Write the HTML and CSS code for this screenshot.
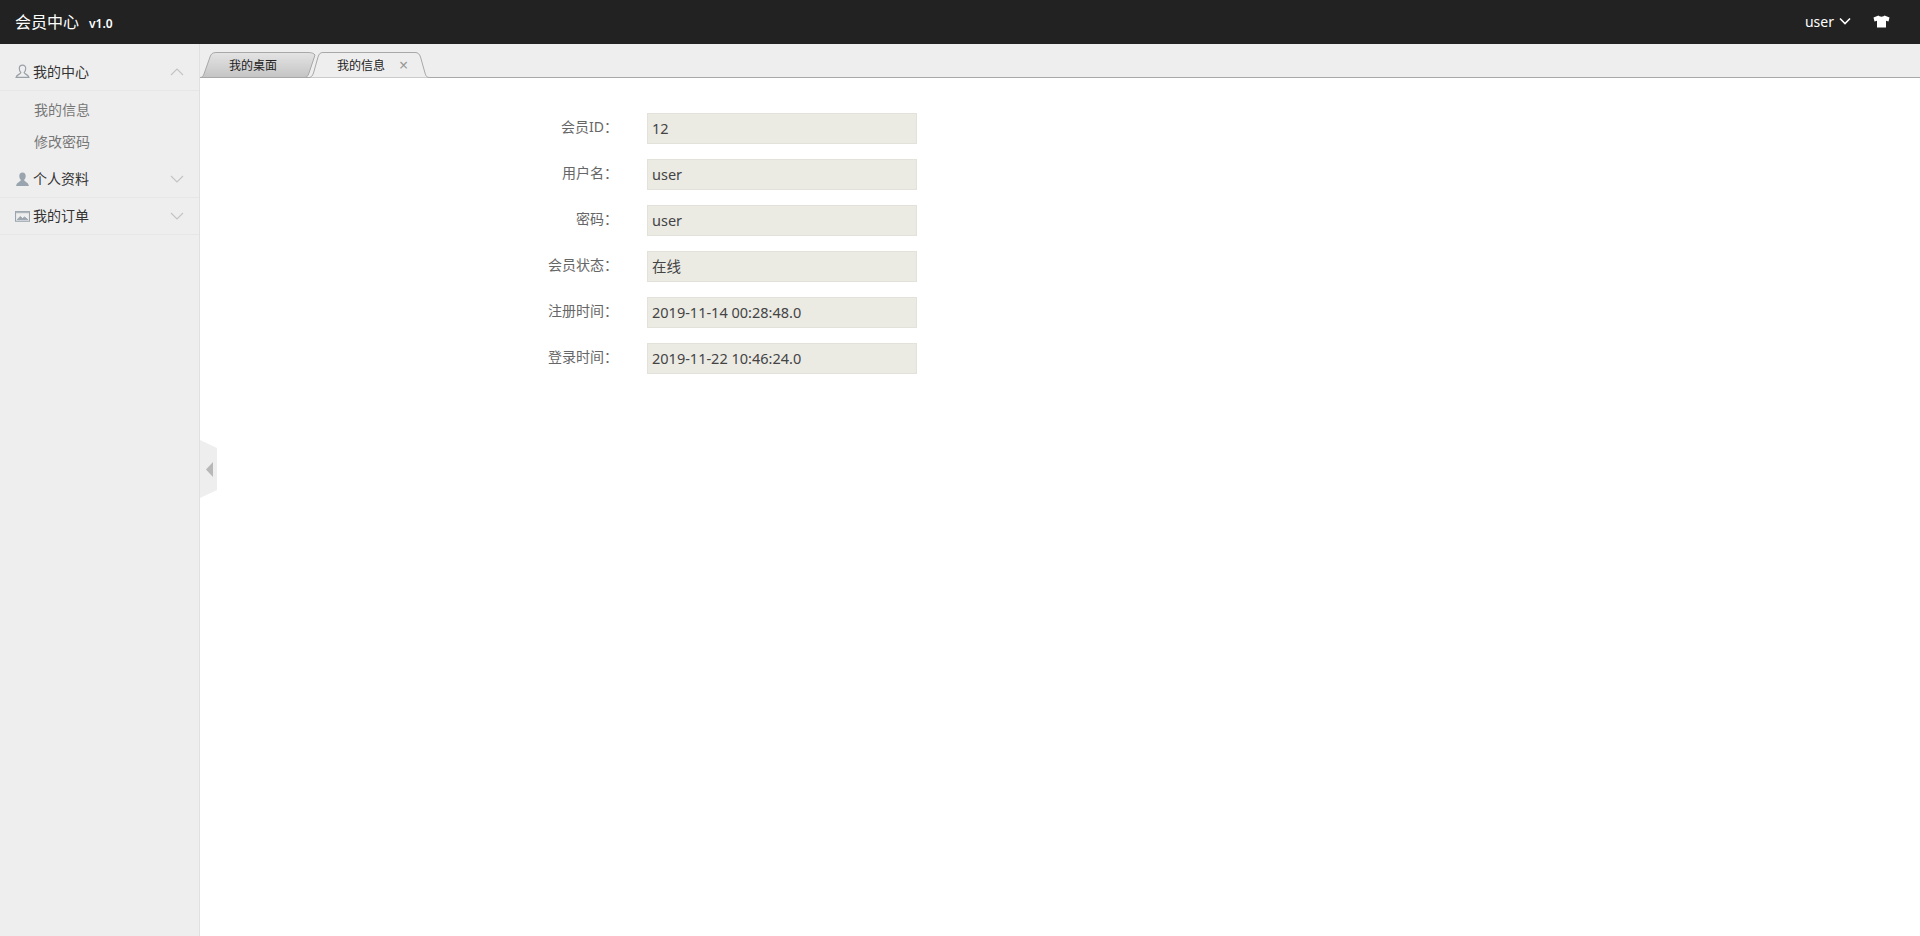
FILE: index.html
```html
<!DOCTYPE html>
<html lang="zh-CN">
<head>
    <meta charset="UTF-8">
    <title>会员中心</title>
    <link rel="stylesheet" href="styles.css">
</head>
<body>
    <!-- 顶部导航 -->
    <header class="navbar">
        <div class="brand">会员中心<span class="version">v1.0</span></div>
        <div class="nav-right">
            <span class="nav-user">user</span>
            <svg class="nav-caret" width="12" height="8" viewBox="0 0 12 8"><path d="M1 1.500l5 5 5-5" fill="none" stroke="#fff" stroke-width="1.600"/></svg>
            <svg class="nav-shirt" width="17" height="13" viewBox="0 0 17 13"><path d="M5.500 0.500L0.500 2.500 1.500 6.500 4 5.800V12.500H13V5.800L15.500 6.500 16.500 2.500 11.500 0.500C10.800 2 6.200 2 5.500 0.500Z" fill="#fff"/></svg>
        </div>
    </header>

    <div class="layout">
        <!-- 左侧菜单 -->
        <aside class="sidebar">
            <div class="menu-title menu-open">
                <svg class="menu-icon" width="14" height="14" viewBox="0 0 14 14"><path d="M7 1C5 1 4 2.400 4 4.200 4 6 4.800 7.200 5.500 8 5.500 9.300 1.500 9.800 1 12.500H13C12.500 9.800 8.500 9.300 8.500 8 9.200 7.200 10 6 10 4.200 10 2.400 9 1 7 1Z" fill="none" stroke="#98a0a8" stroke-width="1.100"/></svg>
                <span class="menu-text">我的中心</span>
                <svg class="menu-arrow" width="14" height="8" viewBox="0 0 14 8"><path d="M1 7l6-6 6 6" fill="none" stroke="#c4c4c4" stroke-width="1.200"/></svg>
            </div>
            <ul class="submenu">
                <li>我的信息</li>
                <li>修改密码</li>
            </ul>
            <div class="menu-title">
                <svg class="menu-icon" width="14" height="14" viewBox="0 0 14 14"><path d="M7 0.500C5 0.500 4 2 4 3.800 4 5.600 4.800 6.800 5.500 7.500 5.500 9 1.500 9.500 1 13H13C12.500 9.500 8.500 9 8.500 7.500 9.200 6.800 10 5.600 10 3.800 10 2 9 0.500 7 0.500Z" fill="#9aa4ae"/></svg>
                <span class="menu-text">个人资料</span>
                <svg class="menu-arrow" width="14" height="8" viewBox="0 0 14 8"><path d="M1 1l6 6 6-6" fill="none" stroke="#c4c4c4" stroke-width="1.200"/></svg>
            </div>
            <div class="menu-title">
                <svg class="menu-icon" width="14" height="12" viewBox="0 0 14 12"><rect x="0.500" y="1.500" width="13" height="9" fill="none" stroke="#9aa4ae"/><path d="M1 2.500h12M2 9l3-3 2 2 2-1.500 3 2.500z" fill="#9aa4ae" stroke="#9aa4ae" stroke-width="0.800"/></svg>
                <span class="menu-text">我的订单</span>
                <svg class="menu-arrow" width="14" height="8" viewBox="0 0 14 8"><path d="M1 1l6 6 6-6" fill="none" stroke="#c4c4c4" stroke-width="1.200"/></svg>
            </div>
        </aside>

        <main class="content">
            <!-- 标签页 -->
            <div class="tabbar">
                <div class="tab tab-first">
                    <svg class="tab-bg" width="116" height="26" viewBox="0 0 116 26"><defs><linearGradient id="tabGrey" x1="0" y1="0" x2="0" y2="1"><stop offset="0" stop-color="#e4e4e4"/><stop offset="1" stop-color="#c4c4c4"/></linearGradient></defs><path d="M0 25.500C2 25.500 3 24.500 4 22L10 5C11 2 12.500 0.500 16 0.500H108C112 0.500 114 1.500 115 3L109 21C108 24 107 25.500 104 25.500Z" fill="url(#tabGrey)" stroke="#a8a8a8"/></svg>
                    <span class="tab-text">我的桌面</span>
                </div>
                <div class="tab tab-active">
                    <svg class="tab-bg" width="122" height="26" viewBox="0 0 122 26"><path d="M0 26C3 25.500 4.500 24 5.500 21L10 5C11 2 12 0.500 15 0.500H107C110 0.500 111.500 2 112.500 5L117 21C118 24.500 119 25.500 122 25.500V26Z" fill="#eee" stroke="#a8a8a8"/></svg>
                    <span class="tab-text">我的信息</span>
                    <span class="tab-close">×</span>
                </div>
            </div>

            <!-- 会员信息 -->
            <form class="info-form">
                <div class="form-row"><label>会员ID：</label><input type="text" value="12" disabled></div>
                <div class="form-row"><label>用户名：</label><input type="text" value="user" disabled></div>
                <div class="form-row"><label>密码：</label><input type="text" value="user" disabled></div>
                <div class="form-row"><label>会员状态：</label><input type="text" value="在线" disabled></div>
                <div class="form-row"><label>注册时间：</label><input type="text" value="2019-11-14 00:28:48.0" disabled></div>
                <div class="form-row"><label>登录时间：</label><input type="text" value="2019-11-22 10:46:24.0" disabled></div>
            </form>

            <!-- 收起菜单 -->
            <div class="collapse-handle">
                <svg width="17" height="58" viewBox="0 0 17 58"><path d="M0 0L17 8V50L0 58Z" fill="#eee"/><path d="M13 22V37L6 29.500Z" fill="#b8b8b8"/></svg>
            </div>
        </main>
    </div>
</body>
</html>
```

FILE: styles.css
```css
* {
    box-sizing: border-box;
}
html, body {
    height: 100%;
}
body {
    margin: 0;
    font-family: "Noto Sans", "Noto Sans CJK SC", sans-serif;
    font-size: 14px;
    color: #333;
    background: #fff;
    overflow: hidden;
}

.navbar {
    display: flex;
    align-items: center;
    justify-content: space-between;
    height: 44px;
    padding: 0 30px 2px 15px;
    background: #222;
    color: #fff;
}
.brand {
    font-size: 16px;
}
.version {
    margin-left: 10px;
    font-size: 12px;
    font-weight: 600;
}
.nav-right {
    display: flex;
    align-items: center;
}
.nav-caret {
    margin-left: 5px;
}
.nav-shirt {
    margin-left: 22px;
}

.layout {
    display: flex;
    height: 892px;
}

.sidebar {
    width: 200px;
    flex-shrink: 0;
    background: #eee;
    border-right: 1px solid #e0e0e0;
}
.menu-title {
    display: flex;
    align-items: center;
    height: 37px;
    padding: 0 15px;
    border-bottom: 1px solid #e6e6e6;
    color: #333;
}
.menu-open {
    height: 47px;
    padding-top: 9px;
}
.menu-icon {
    width: 15px;
    height: auto;
    flex-shrink: 0;
}
.menu-text {
    margin-left: 3px;
    padding-bottom: 2px;
    flex: 1;
}
.submenu {
    list-style: none;
    margin: 0;
    padding: 3px 0 3px 34px;
    color: #777;
}
.submenu li {
    height: 32px;
    line-height: 32px;
}

.content {
    position: relative;
    flex: 1;
}
.tabbar {
    display: flex;
    height: 34px;
    padding-top: 8px;
    background: #eee;
    border-bottom: 1px solid #a8a8a8;
    font-size: 12px;
}
.tab {
    position: relative;
    height: 26px;
    line-height: 27px;
}
.tab-first {
    width: 108px;
    padding-left: 29px;
}
.tab-active {
    width: 122px;
    padding-left: 29px;
}
.tab-bg {
    position: absolute;
    left: 0;
    top: 0;
}
.tab-text {
    position: relative;
    color: #222;
}
.tab-close {
    position: absolute;
    left: 91px;
    top: 0;
    color: #999;
    font-size: 16px;
}

.info-form {
    padding-top: 35px;
}
.form-row {
    display: flex;
    align-items: center;
    height: 31px;
    margin-bottom: 15px;
}
.form-row label {
    width: 418px;
    padding-bottom: 6px;
    text-align: right;
    color: #666;
}
.form-row input {
    width: 270px;
    height: 31px;
    margin-left: 29px;
    padding: 0 4px 2px;
    border: 1px solid #e2e2da;
    background: #ebebe4;
    color: #444;
    font-family: inherit;
    font-size: 14.500px;
    -webkit-text-fill-color: #444;
    opacity: 1;
}

.collapse-handle {
    position: absolute;
    left: 0;
    top: 396px;
    height: 58px;
}
```
